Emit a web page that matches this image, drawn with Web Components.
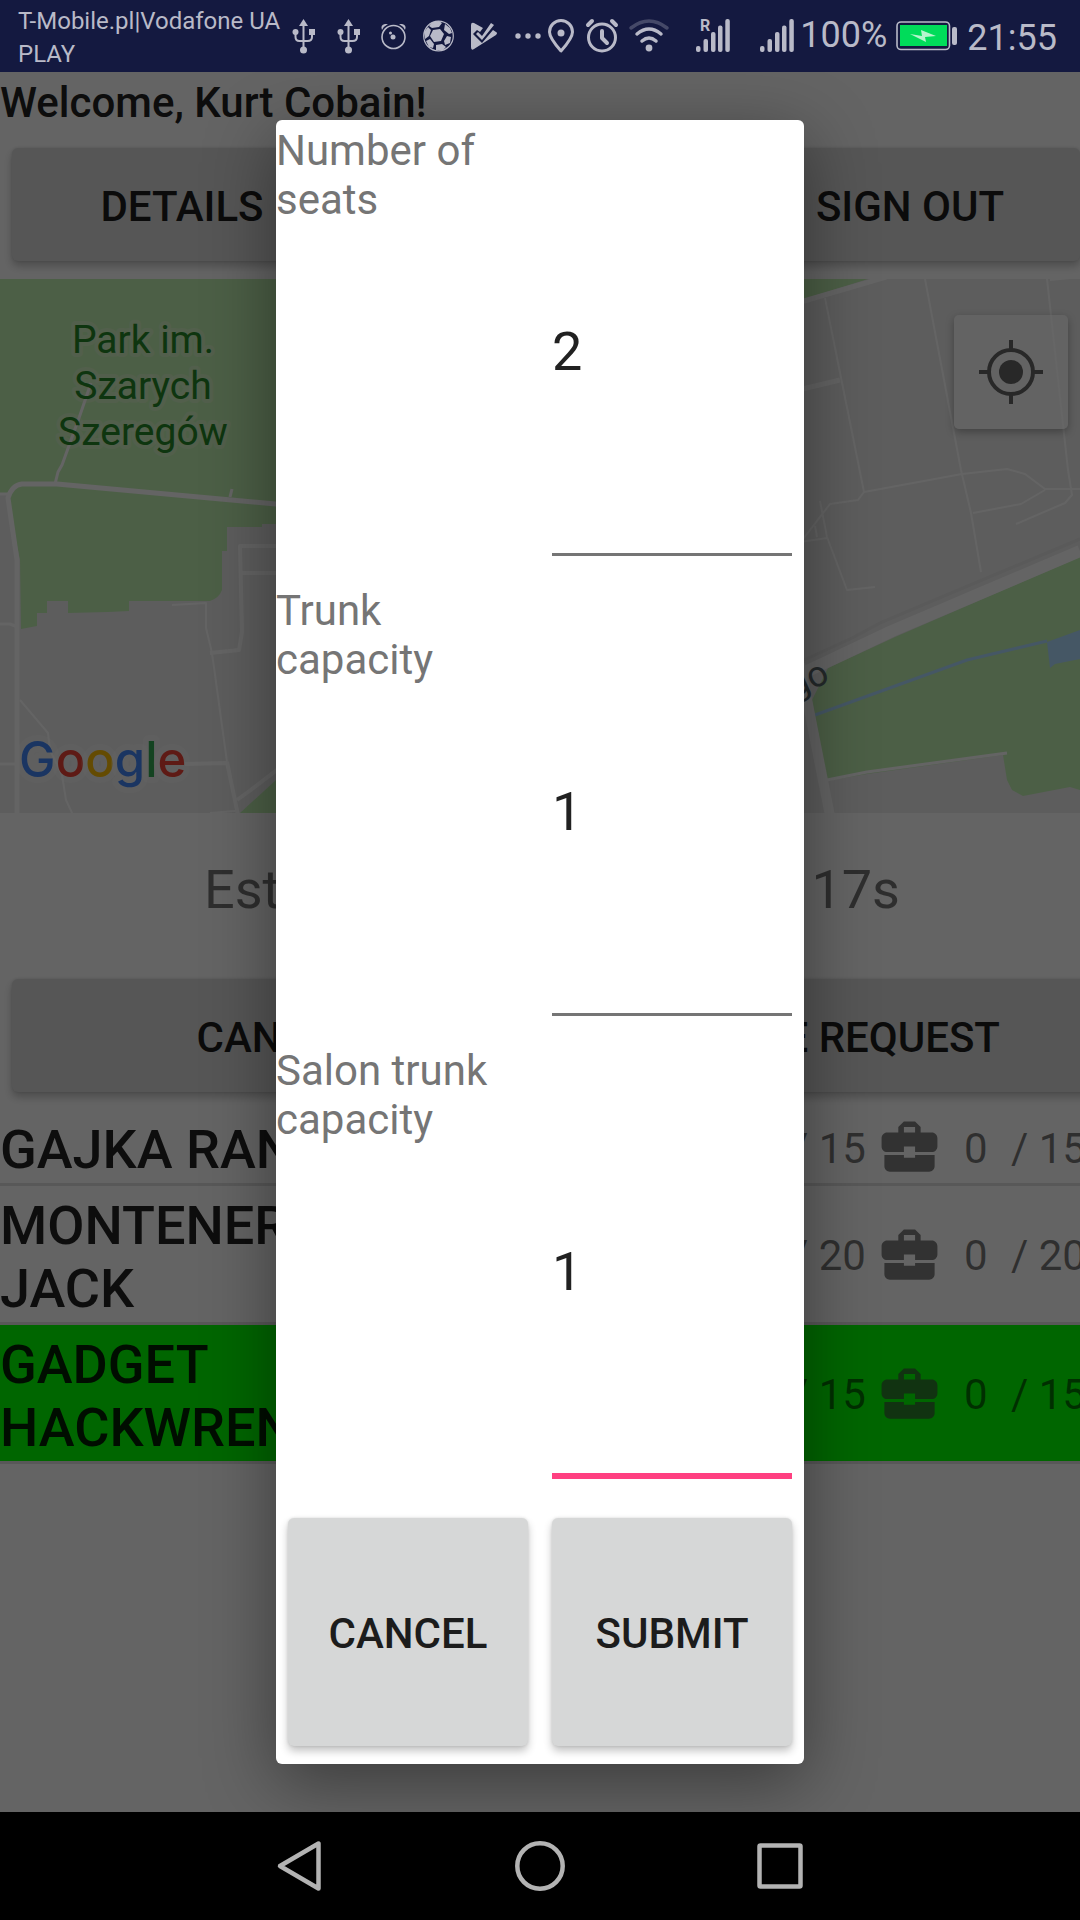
<!DOCTYPE html>
<html lang="en">
<head>
<meta charset="utf-8">
<meta name="viewport" content="width=device-width, initial-scale=1">
<title>Ride planner</title>
<style>
  body { margin: 0; font-family: Roboto, "Noto Sans", sans-serif; font-size: 42px; line-height: 49px; color: #1f1f1f; background: #000; }
</style>
</head>
<body>
<phone-screen></phone-screen>
<script>
const define = (name, html, setup) => {
  const template = document.createElement('template');
  template.innerHTML = html;
  customElements.define(name, class extends HTMLElement {
    constructor() {
      super();
      this.attachShadow({ mode: 'open' }).append(template.content.cloneNode(true));
    }
    connectedCallback() { if (setup) setup(this, this.shadowRoot); }
  });
};

const usbIcon = `<svg width="45" height="36" viewBox="0 0 45 36"><path d="M22.500 1l4.500 7h-9z"/><circle cx="22.500" cy="32" r="3.500"/><circle cx="14.500" cy="14" r="3"/><path d="M28 11h6v6h-6z"/><path class="line" style="stroke-width:2" d="M22.500 6v26M14.500 14v5q0 4 4 4h8q4.500 0 4.500-4v-5"/></svg>`;
const signalBars = `<rect x="17" y="28" width="4.500" height="6" rx="2"/><rect x="24.500" y="21" width="4.500" height="13" rx="2"/><rect x="32" y="14" width="4.500" height="20" rx="2"/><rect x="39" y="7.500" width="4.500" height="26.500" rx="2"/><rect x="46.300" y="1" width="4.500" height="33" rx="2"/>`;

define('status-bar', `
<style>
  :host { display: flex; align-items: center; height: 72px; padding: 0 23px 0 18px; box-sizing: border-box; background: #141940; color: #b9bac8; font-size: 36px; line-height: 42px; }
  .carrier { flex: 1; min-width: 0; padding-top: 3px; font-size: 24px; line-height: 33px; }
  .group { display: flex; align-items: center; }
  .system { gap: 10px; }
  .level { margin: 0 9px 0 6px; padding-bottom: 2px; }
  .clock { margin-left: 9px; padding-top: 4px; }
  svg { display: block; overflow: visible; fill: currentColor; stroke: none; }
  .line { fill: none; stroke: currentColor; stroke-width: 3; stroke-linecap: round; stroke-linejoin: round; }
</style>
<div class="carrier">T-Mobile.pl|Vodafone UA<br>PLAY</div>
<div class="group">
  ${usbIcon}
  ${usbIcon}
  <svg width="45" height="36" viewBox="0 0 45 36"><circle class="line" style="stroke-width:1.600" cx="22.500" cy="19" r="11.500"/><path d="M11 12q-2-5 3-6h3q-4 2-6 6zM34 12q2-5-3-6h-3q4 2 6 6z"/><circle cx="22" cy="19" r="2.500"/><circle cx="19.500" cy="15" r="1.500"/></svg>
  <svg width="45" height="36" viewBox="0 0 45 36"><circle class="line" style="stroke-width:1.200" cx="22.500" cy="18" r="14.800"/><path d="M17 12l7-1 4 5-3 7-7 1-4-6zM16 4l7-1 3 2-3 4-7 1-3-2zM29 6l5 4 2 5-3 1-5-4zM8 14l4-5 3 3-2 6-4 3zM10 23l4-2 4 5-1 4-4-1zM20 27l6-1 4 3-3 3h-7zM28 23l3-5 4 1-1 6-5 2z"/></svg>
  <svg width="45" height="36" viewBox="0 0 45 36"><path d="M10 7q0-3 3-2l9 5-3 4-3-2-4 4 9 9 11-13 3 2q2 1 0 3L13 31q-3 2-3-2z"/><path d="M15 16l2-2 4 4L30 5l3 2-12 15z"/></svg>
  <svg width="41" height="36" viewBox="0 0 41 36"><circle cx="12" cy="18" r="2.700"/><circle cx="22" cy="18" r="2.700"/><circle cx="32" cy="18" r="2.700"/></svg>
</div>
<div class="group system">
  <svg width="28" height="36" viewBox="0 0 28 36"><path class="line" d="M14 33Q2.500 20 2.500 14a11.500 11.500 0 0 1 23 0Q25.500 20 14 33z"/><circle cx="14" cy="15" r="3.500"/></svg>
  <svg width="34" height="36" viewBox="0 0 34 36"><g class="line"><circle cx="17" cy="19.500" r="13.500"/><path style="stroke-width:4" d="M17 13v7l5 5"/><path style="stroke-width:4" d="M3 7l4-4M31 7l-4-4"/></g></svg>
  <svg width="40" height="36" viewBox="0 0 40 36"><g class="line" style="stroke-width:3.500"><path opacity=".3" d="M2 10q18-14 36 0"/><path d="M8 16q12-10 24 0M13 23q7-6 14 0"/></g><circle cx="20" cy="30" r="3.400"/></svg>
  <svg width="51" height="36" viewBox="0 0 51 36">${signalBars}<text x="21" y="13" font-size="16" font-weight="700">R</text></svg>
  <svg width="54" height="36" viewBox="-3 0 54 36">${signalBars}</svg>
</div>
<span class="level">100%</span>
<svg width="62" height="36" viewBox="0 0 62 36"><rect class="line" style="stroke-width:1.600" x="1" y="4" width="52.500" height="27.500" rx="4"/><rect x="4" y="7" width="47" height="21" fill="#00dc5a"/><path fill="#b5f5cd" d="M14 16l12 2-1-6 15 6-11 1 1 5z"/><rect x="56" y="9" width="5" height="18" rx="2"/></svg>
<span class="clock">21:55</span>
`);

define('raised-button', `
<style>
  :host { display: block; }
  button { display: block; width: 100%; height: 100%; min-height: 113px; margin: 0; padding: 3px 0 0; border: 0; border-radius: 6px; background: #d6d7d7; color: #1c1c1c; font: 500 42px/49px Roboto, "Noto Sans", sans-serif; text-transform: uppercase; white-space: nowrap; box-shadow: 0 5px 9px rgba(0,0,0,.24), 0 0 3px rgba(0,0,0,.12); }
</style>
<button type="button"><slot></slot></button>
`);

define('map-view', `
<style>
  :host { display: grid; height: 534px; overflow: hidden; background: #e8e8e8; }
  svg.map { grid-area: 1 / 1; display: block; width: 100%; height: 534px; }
  button { grid-area: 1 / 1; z-index: 1; justify-self: end; align-self: start; margin: 36px 12px 0 0; width: 114px; height: 114px; padding: 0; border: 0; border-radius: 5px; background: rgba(255,255,255,.68); box-shadow: 0 3px 8px rgba(0,0,0,.3); display: grid; place-items: center; }
  .roads path { fill: none; stroke: #fafafa; stroke-linejoin: round; }
  .park { fill: #beedaf; }
  .place { fill: #238426; stroke: rgba(240,240,225,.28); stroke-width: 8px; paint-order: stroke; font-size: 39px; text-anchor: middle; stroke-linejoin: round; }
  .street { fill: #5b676b; font-size: 36px; text-anchor: end; }
  .logo { font: 500 49px Inter, sans-serif; stroke: rgba(255,255,255,.25); stroke-width: 12px; paint-order: stroke; stroke-linejoin: round; }
</style>
<svg class="map" viewBox="0 279 1080 534" preserveAspectRatio="xMidYMid slice" role="img" aria-label="Map">
  <g class="park">
    <path d="M0 279H500V524H262V527H227V551H222V590Q219 598 210 601H129V611L108 612L68 613V601H47V613H37V626L21 629L20 560L8 500V494H0z"/>
    <path d="M240 813L276 780H500V813zM700 279H868L804 299H700z"/>
    <path d="M828 668L895 637L1080 557V790L1070 787L1023 796L1012 790L1007 780L1003 755L867 774L827 781L812 700z"/>
  </g>
  <path fill="none" stroke="#acd9fc" stroke-width="3" d="M815 715L967 660L1047 641"/>
  <path fill="#acd9fc" d="M1047 642L1080 630V659L1055 664L1050 668z"/>
  <path fill="none" stroke="#e0e0e0" stroke-width="3" d="M804 660L852 638L882 622L1080 539"/>
  <g class="roads">
    <path stroke-width="5" d="M17 820V560L8 498Q12 485 22 484H57L330 509"/>
    <path stroke-width="3" d="M0 494H8M55 484L58 472L62 465L79 418L91 383M230 497L232 489M0 624H10L18 627M0 764H17"/>
    <path stroke-width="2" d="M20 700L48 733L50 750L62 775L66 800L73 815M172 605L206 603V628L212 653L227 762M210 813L235 811"/>
    <path stroke-width="4" d="M227 762L239 820M185 764L227 763M210 653L239 650L242 632L240 546H300M242 573H300M237 800L248 792L290 760"/>
    <path stroke-width="5" d="M780 310L804 301L886 277M790 392L840 380"/>
    <path stroke-width="2" d="M825 298L864 492M925 279L961 470L971 513L981 572M1047 279L1068 470L1072 495L1065 503L1016 524M1050 280L1080 277"/>
    <path stroke-width="2" d="M800 543L830 504L858 500L864 492L962 474L1007 469L1025 474L1045 489H1080M973 513L1021 504L1045 490M820 501L827 537L847 590L875 587M800 542L827 538M815 526L817 537"/>
    <path stroke-width="12" d="M780 684L892 631L1080 551"/>
    <path stroke-width="10" d="M800 664L832 826"/>
    <path stroke-width="3" d="M827 780L867 772L1007 753"/>
  </g>
  <text class="place" x="143" y="353">Park im.</text>
  <text class="place" x="143" y="399">Szarych</text>
  <text class="place" x="143" y="445">Szeregów</text>
  <text class="street" transform="translate(831 681) rotate(-25)">go</text>
  <text class="logo" x="19" y="777"><tspan fill="#4285f4">G</tspan><tspan fill="#ea4335">o</tspan><tspan fill="#fbbc05">o</tspan><tspan fill="#4285f4">g</tspan><tspan fill="#34a853">l</tspan><tspan fill="#ea4335">e</tspan></text>
</svg>
<button type="button" aria-label="My location"><svg width="64" height="64" viewBox="0 0 64 64" fill="none" stroke="#646464" stroke-width="4"><circle cx="32" cy="32" r="22"/><circle cx="32" cy="32" r="12" fill="#646464" stroke="none"/><path d="M32 0v9M32 55v9M0 32h9M55 32h9"/></svg></button>
`);

define('crew-row', `
<style>
  :host { display: flex; align-items: center; overflow: hidden; border-bottom: 3px solid #dcdcdc; }
  :host([selected]) { background: linear-gradient(#0f0, #0f0) padding-box; }
  .name { flex: none; width: calc(100% - 289px); padding: 8px 300px 2px 0; box-sizing: border-box; color: rgba(0,0,0,.87); font-size: 54px; line-height: 63px; font-weight: 500; text-transform: uppercase; }
  .stats { flex: none; display: flex; align-items: center; color: rgba(0,0,0,.54); white-space: nowrap; }
  .stats span { padding-top: 3px; }
  .cap { width: 75px; }
  svg { display: block; margin: 0 21px 0 10px; fill: rgba(64,64,64,.67); }
  .used { width: 47px; }
</style>
<div class="name"><slot></slot></div>
<div class="stats">
  <span class="cap"></span>
  <svg width="67" height="67" viewBox="0 0 24 24" aria-hidden="true"><path d="M10 16v-1H3.010L3 19c0 1.110.89 2 2 2h14c1.110 0 2-.89 2-2v-4h-7v1h-4zm10-9h-4.010V5l-2-2h-4l-2 2v2H4c-1.100 0-2 .9-2 2v3c0 1.110.89 2 2 2h6v-2h4v2h6c1.100 0 2-.9 2-2V9c0-1.100-.9-2-2-2zm-6 0h-4V5h4v2z"/></svg>
  <span class="used">0</span>
  <span class="cap"></span>
</div>
`, (el, root) => {
  root.querySelectorAll('.cap').forEach(s => { s.textContent = '/ ' + el.getAttribute('capacity'); });
});

define('ride-page', `
<style>
  :host { display: block; background: #fafafa; overflow: hidden; }
  h1 { margin: 0; padding: 6px 0 3px; font-size: 42px; line-height: 49px; font-weight: 500; color: #212121; }
  .actions { display: flex; justify-content: space-between; padding: 18px 0 18px 12px; }
  .actions raised-button { width: 340px; }
  .wide { gap: 24px; margin-right: -12px; }
  .wide raised-button { flex: 1; width: auto; }
  .estimate { display: flex; justify-content: space-between; padding: 45px 180px 40px 204px; font-size: 54px; line-height: 63px; color: rgba(0,0,0,.54); }
</style>
<h1>Welcome, Kurt Cobain!</h1>
<div class="actions"><raised-button>Details</raised-button><raised-button>Sign out</raised-button></div>
<map-view></map-view>
<div class="estimate"><span>Estimated</span><span>17s</span></div>
<div class="actions wide"><raised-button>Cancel</raised-button><raised-button>Create request</raised-button></div>
<crew-row capacity="15">Gajka Ranger</crew-row>
<crew-row capacity="20">Monteneray Jack</crew-row>
<crew-row capacity="15" selected>Gadget Hackwrench</crew-row>
`);

define('number-field', `
<style>
  :host { display: grid; grid-template-columns: 1fr 1fr; }
  label { padding-top: 6px; color: #757575; }
  input { min-width: 0; margin: 0 12px 24px; padding: 30px 0 0; border: 0; border-bottom: 3px solid #757575; border-radius: 0; outline: 0; background: none; color: #212121; font: 400 54px/63px Roboto, "Noto Sans", sans-serif; }
  :host([active]) input { margin-bottom: 21px; border-bottom: 6px solid #ff4081; }
</style>
<label for="value"><slot></slot></label>
<input id="value" type="text" inputmode="numeric">
`, (el, root) => {
  const input = root.querySelector('input');
  input.value = el.getAttribute('value');
  input.setAttribute('aria-label', el.textContent);
});

define('capacity-dialog', `
<style>
  :host { display: grid; grid-template-rows: repeat(3, 1fr) 264px; width: 528px; max-width: 100%; background: #fff; border-radius: 6px; box-shadow: 0 18px 70px rgba(0,0,0,.42); }
  .buttons { display: grid; grid-template-columns: 1fr 1fr; gap: 24px; padding: 18px 12px; }
</style>
<number-field value="2">Number of seats</number-field>
<number-field value="1">Trunk capacity</number-field>
<number-field value="1" active>Salon trunk capacity</number-field>
<div class="buttons"><raised-button>Cancel</raised-button><raised-button>Submit</raised-button></div>
`);

define('nav-bar', `
<style>
  :host { display: flex; justify-content: center; height: 108px; background: #000; }
  button { width: 240px; padding: 0; border: 0; background: none; display: grid; place-items: center; }
  svg { fill: none; stroke: #b3b3b3; stroke-width: 4.500; stroke-linejoin: round; }
</style>
<button type="button" aria-label="Back"><svg width="52" height="52" viewBox="0 0 52 52"><path d="M44.500 3.500v45L6 26z"/></svg></button>
<button type="button" aria-label="Home"><svg width="52" height="52" viewBox="0 0 52 52"><circle cx="26" cy="26" r="22.700"/></svg></button>
<button type="button" aria-label="Recent apps"><svg width="52" height="52" viewBox="0 0 52 52"><rect x="5.500" y="5.500" width="41" height="41" rx="1"/></svg></button>
`);

define('phone-screen', `
<style>
  :host { display: flex; flex-direction: column; min-height: 100vh; }
  .stage { flex: 1; display: grid; grid-template-columns: minmax(0, 1fr); overflow: hidden; }
  ride-page, .scrim { grid-area: 1 / 1; }
  .scrim { z-index: 2; display: grid; justify-content: center; padding: 48px 0; background: rgba(0,0,0,.6); }
</style>
<status-bar></status-bar>
<div class="stage">
  <ride-page></ride-page>
  <div class="scrim"><capacity-dialog role="dialog" aria-label="Capacity"></capacity-dialog></div>
</div>
<nav-bar></nav-bar>
`);
</script>
</body>
</html>
